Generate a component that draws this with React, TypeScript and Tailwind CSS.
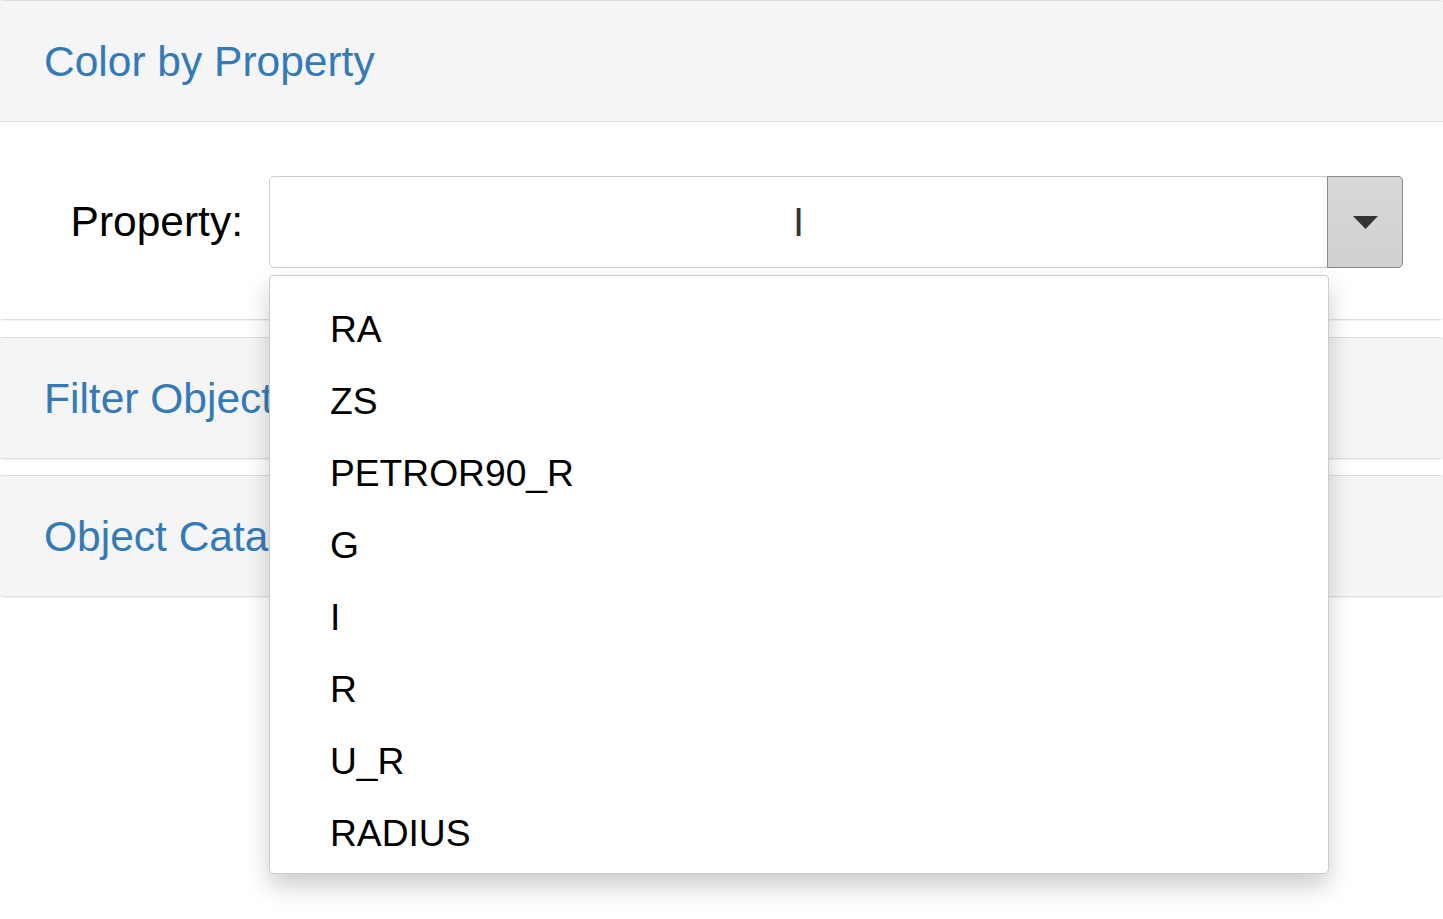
import React from "react";

const items = ["RA", "ZS", "PETROR90_R", "G", "I", "R", "U_R", "RADIUS"];

function PanelHeader({ title }: { title: string }) {
  return (
    <div className="h-[120px] bg-[#f5f5f5] flex items-center pl-[45px] pt-[2px]">
      <span className="text-[#337ab7] text-[42.5px] leading-none whitespace-nowrap">{title}</span>
    </div>
  );
}

export default function App() {
  return (
    <div
      className="w-[1443px] h-[919px] bg-white overflow-hidden"
      style={{ fontFamily: '"Liberation Sans", Arial, Helvetica, sans-serif' }}
    >
      <div className="-mx-[2px]">
        {/* Panel 1 */}
        <div className="border border-[#dddddd] rounded-[5px] shadow-[0_1px_1px_rgba(0,0,0,0.05)]">
          <div className="border-b border-[#dddddd] rounded-t-[5px] overflow-hidden">
            <PanelHeader title="Color by Property" />
          </div>
          <div className="h-[197px] bg-white flex items-start pt-[54px] pr-[41px]">
            <div className="w-[244px] h-[92px] flex items-center justify-end">
              <span className="text-[42.5px] text-black leading-none">Property:</span>
            </div>
            <div className="ml-[26px] flex-1 relative">
              <div className="h-[92px] flex border border-[#cccccc] rounded-[5px] bg-white">
                <div className="flex-1 flex items-center justify-center">
                  <span className="text-[40px] text-[#333333] leading-none">I</span>
                </div>
                <div className="w-[76px] -my-px -mr-px border border-[#8a8a8a] rounded-r-[5px] bg-[linear-gradient(#d8d8d8,#d0d0d0)] flex items-center justify-center">
                  <svg width="25" height="13" viewBox="0 0 25 13">
                    <polygon points="0,0 25,0 12.5,13" fill="#333333" />
                  </svg>
                </div>
              </div>
              {/* Dropdown menu */}
              <div className="absolute left-0 top-[99px] w-[1060px] z-10 bg-white border border-[#cccccc] rounded-b-[5px] rounded-t-[4px] shadow-[0_12px_24px_rgba(0,0,0,0.2)] pt-[18px] pb-[3px]">
                {items.map((it) => (
                  <div key={it} className="h-[72px] flex items-center pl-[60px]">
                    <span className="text-[37.2px] text-black leading-none">{it}</span>
                  </div>
                ))}
              </div>
            </div>
          </div>
        </div>

        {/* Panel 2 */}
        <div className="mt-[17px] border border-[#dddddd] rounded-[5px] overflow-hidden shadow-[0_1px_1px_rgba(0,0,0,0.05)]">
          <PanelHeader title="Filter Objects" />
        </div>

        {/* Panel 3 */}
        <div className="mt-[16px] border border-[#dddddd] rounded-[5px] overflow-hidden shadow-[0_1px_1px_rgba(0,0,0,0.05)]">
          <PanelHeader title="Object Catalog" />
        </div>
      </div>
    </div>
  );
}
